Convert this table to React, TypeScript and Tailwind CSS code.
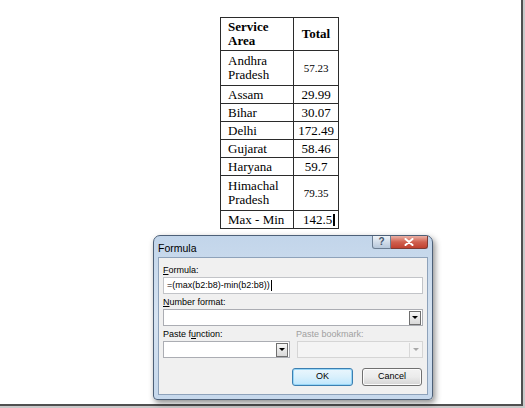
const rows: { area: string[]; total: string; small?: boolean }[] = [
  { area: ['Andhra', 'Pradesh'], total: '57.23', small: true },
  { area: ['Assam'], total: '29.99' },
  { area: ['Bihar'], total: '30.07' },
  { area: ['Delhi'], total: '172.49' },
  { area: ['Gujarat'], total: '58.46' },
  { area: ['Haryana'], total: '59.7' },
  { area: ['Himachal', 'Pradesh'], total: '79.35', small: true },
];

const DropButton = ({ disabled }: { disabled?: boolean }) => (
  <div
    className={
      disabled
        ? 'flex h-[14px] w-[12px] items-center justify-center border-l border-[#d8d8d8]'
        : 'flex h-[14px] w-[12px] items-center justify-center border border-[#6f6f6f] bg-gradient-to-b from-[#f7f7f7] to-[#d9d9d9]'
    }
  >
    <div
      className={
        disabled
          ? 'h-0 w-0 border-x-[3px] border-t-[3px] border-x-transparent border-t-[#a8a8a8]'
          : 'h-0 w-0 border-x-[3px] border-t-[3px] border-x-transparent border-t-black'
      }
    />
  </div>
);

const Combo = ({ className, disabled }: { className: string; disabled?: boolean }) => (
  <div
    className={
      (disabled ? 'border-[#d5d5d5] bg-[#f4f4f4] ' : 'border-[#abadb3] bg-white ') +
      'flex h-[17px] items-center justify-end border pr-[1px] ' +
      className
    }
  >
    <DropButton disabled={disabled} />
  </div>
);

export default function App() {
  return (
    <div className="h-[408px] w-[525px] overflow-hidden bg-[#c9c9c9]">
      <div className="flex h-[406px] w-[523px] flex-col border-r-2 border-b-2 border-[#505050] bg-white">
        <table
          className="mt-[17px] ml-[220px] w-[119px] border-collapse border border-[#2b2b2b] text-[13px] leading-[14px] text-black"
          style={{ fontFamily: '"Liberation Serif", "Times New Roman", serif' }}
        >
          <tbody>
            <tr className="h-[33px]">
              <td className="w-[73px] border border-[#2b2b2b] pl-[7px] font-bold">
                Service
                <br />
                Area
              </td>
              <td className="border border-[#2b2b2b] text-center font-bold">Total</td>
            </tr>
            {rows.map((r) => (
              <tr key={r.area.join(' ')} className={r.area.length > 1 ? 'h-[35px]' : 'h-[18px]'}>
                <td className="border border-[#2b2b2b] pl-[7px]">
                  {r.area.map((a, i) => (
                    <div key={i}>{a}</div>
                  ))}
                </td>
                <td className={'border border-[#2b2b2b] text-center ' + (r.small ? 'text-[11px]' : '')}>
                  {r.total}
                </td>
              </tr>
            ))}
            <tr className="h-[18px]">
              <td className="border border-[#2b2b2b] pl-[7px]">Max - Min</td>
              <td className="border border-[#2b2b2b] pl-[9px]">
                <span>142.5</span>
                <span className="ml-[1px] inline-block h-[12px] w-[2px] translate-y-[2px] bg-black" />
              </td>
            </tr>
          </tbody>
        </table>

        <div
          className="mt-[6px] ml-[153px] flex h-[165px] w-[280px] flex-col rounded-t-[7px] rounded-b-[4px] border border-[#4d6078] bg-gradient-to-b from-[#c2d5ea] via-[#d6e3f1] to-[#c6d8ec] text-[9px] text-black shadow-[2px_3px_6px_rgba(0,0,0,0.45)]"
          style={{ fontFamily: '"Liberation Sans", Arial, sans-serif' }}
        >
          <div className="flex h-[21px] items-start">
            <span className="mt-[5px] ml-[4px] text-[10.5px]">Formula</span>
            <div className="ml-auto mr-[4px] flex">
              <div className="flex h-[13px] w-[19px] items-center justify-center rounded-bl-[3px] border border-t-0 border-[#6c7e93] bg-gradient-to-b from-[#eef3f8] to-[#b6c7db] text-[10px] font-bold leading-none text-[#44556b]">
                ?
              </div>
              <div className="flex h-[13px] w-[37px] items-center justify-center rounded-br-[3px] border border-t-0 border-l-0 border-[#7d3a33] bg-gradient-to-b from-[#e9b0a6] via-[#d0604f] to-[#c0402f]">
                <svg width="10" height="8" viewBox="0 0 10 8">
                  <path d="M1.5 1 L8.5 7 M8.5 1 L1.5 7" stroke="#fff" strokeWidth="2" strokeLinecap="round" />
                </svg>
              </div>
            </div>
          </div>
          <div className="mx-[4px] mb-[4px] flex flex-1 flex-col border border-[#8ea2ba] bg-[#f0f0f0] px-[4px] pt-[5px]">
            <div className="h-[14px] leading-[14px]">
              <span className="underline">F</span>ormula:
            </div>
            <div className="flex h-[17px] items-center border border-[#c2c4c8] bg-white pl-[3px]">
              =(max(b2:b8)-min(b2:b8))
              <span className="ml-[1px] inline-block h-[11px] w-[1px] bg-black" />
            </div>
            <div className="mt-[1px] h-[14px] leading-[14px]">
              <span className="underline">N</span>umber format:
            </div>
            <Combo className="w-full" />
            <div className="mt-[1px] flex h-[14px] leading-[14px]">
              <div className="w-[133px]">
                Paste f<span className="underline">u</span>nction:
              </div>
              <div className="text-[#a0a0a0]">Paste bookmark:</div>
            </div>
            <div className="flex gap-[7px]">
              <Combo className="w-[127px]" />
              <Combo className="flex-1" disabled />
            </div>
            <div className="mt-[10px] flex justify-end gap-[9px] pr-[1px]">
              <div className="flex h-[18px] w-[61px] items-center justify-center rounded-[3px] border border-[#3c7fb1] bg-gradient-to-b from-[#eaf6fd] via-[#d9f0fc] to-[#bee6fd] shadow-[inset_0_0_0_1px_#97d6f7]">
                OK
              </div>
              <div className="flex h-[18px] w-[60px] items-center justify-center rounded-[3px] border border-[#707070] bg-gradient-to-b from-[#f2f2f2] via-[#ebebeb] to-[#d4d4d4] shadow-[inset_0_0_0_1px_#fcfcfc]">
                Cancel
              </div>
            </div>
          </div>
        </div>
      </div>
    </div>
  );
}
